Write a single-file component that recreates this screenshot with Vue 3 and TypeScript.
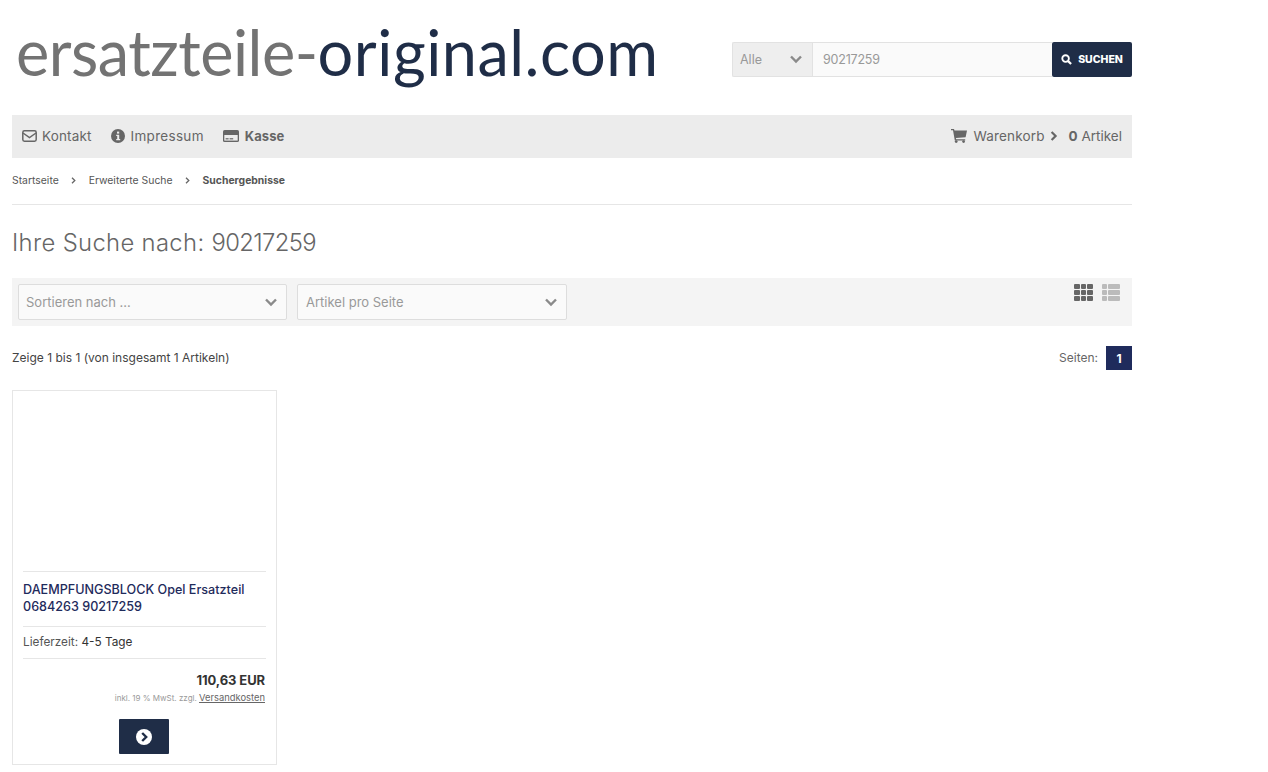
<template>
  <div class="page">
    <header class="top">
      <div class="logo"><span class="logo-grey">ersatzteile-</span><span class="logo-navy">original.com</span></div>
      <form class="search" @submit.prevent>
        <div class="search-cat">
          <span>Alle</span>
          <svg class="chev" width="14" height="14" viewBox="0 0 14 14"><path d="M2 4.5 7 9.5 12 4.5" fill="none" stroke="currentColor" stroke-width="2.4" /></svg>
        </div>
        <div class="search-input">90217259</div>
        <button class="search-btn" type="button">
          <svg width="11" height="11" viewBox="0 0 12 12"><circle cx="5" cy="5" r="3.6" fill="none" stroke="#fff" stroke-width="2" /><path d="M7.8 7.8 11 11" stroke="#fff" stroke-width="2.4" /></svg>
          <span>SUCHEN</span>
        </button>
      </form>
    </header>

    <nav class="nav">
      <div class="nav-links">
        <a class="nav-item">
          <svg width="15" height="12" viewBox="0 0 15 12"><rect x=".8" y=".8" width="13.4" height="10.4" rx="1.6" fill="none" stroke="#666" stroke-width="1.5" /><path d="M1 3 7.5 7.5 14 3" fill="none" stroke="#666" stroke-width="1.5" /></svg>
          Kontakt
        </a>
        <a class="nav-item nav-wide">
          <svg width="14" height="14" viewBox="0 0 14 14"><circle cx="7" cy="7" r="7" fill="#666" /><rect x="6" y="2.6" width="2.2" height="2" fill="#ececec" /><path d="M5.2 5.8H8.2V10H9.2V11.2H5.2V10H6.2V7H5.2Z" fill="#ececec" /></svg>
          Impressum
        </a>
        <a class="nav-item nav-strong">
          <svg width="16" height="12" viewBox="0 0 16 12"><rect width="16" height="12" rx="1.6" fill="#666" /><rect x="1.3" y="5" width="13.4" height="5.6" fill="#ececec" /><rect x="2.6" y="8.2" width="3" height="1.2" fill="#666" /><rect x="6.6" y="8.2" width="3.6" height="1.2" fill="#666" /></svg>
          Kasse
        </a>
      </div>
      <div class="cart">
        <svg width="16" height="14" viewBox="0 0 16 14"><path d="M0 0H3L3.5 1.6H16L14.6 8.2 4.9 9 5.2 10.2H14.2V11.4H3.8L2 1.3H0Z" fill="#666" /><circle cx="5.2" cy="12.6" r="1.4" fill="#666" /><circle cx="12.6" cy="12.6" r="1.4" fill="#666" /></svg>
        <span class="cart-label">Warenkorb</span>
        <svg class="cart-arrow" width="8" height="10" viewBox="0 0 8 10"><path d="M1.6 1 5.6 5 1.6 9" fill="none" stroke="#666" stroke-width="2.2" /></svg>
        <span class="cart-count"><b>0</b> Artikel</span>
      </div>
    </nav>

    <div class="crumbs">
      <span>Startseite</span>
      <svg width="5" height="7" viewBox="0 0 5 7"><path d="M1 .8 3.8 3.5 1 6.2" fill="none" stroke="#666" stroke-width="1.3" /></svg>
      <span>Erweiterte Suche</span>
      <svg width="5" height="7" viewBox="0 0 5 7"><path d="M1 .8 3.8 3.5 1 6.2" fill="none" stroke="#666" stroke-width="1.3" /></svg>
      <b>Suchergebnisse</b>
    </div>

    <h1 class="title">Ihre Suche nach: <span>90217259</span></h1>

    <div class="toolbar">
      <div v-for="s in selects" :key="s" class="sel">
        <span>{{ s }}</span>
        <svg class="chev" width="14" height="14" viewBox="0 0 14 14"><path d="M2 4.5 7 9.5 12 4.5" fill="none" stroke="currentColor" stroke-width="2.4" /></svg>
      </div>
      <div class="views">
        <div class="grid-ico">
          <i v-for="n in 9" :key="n"></i>
        </div>
        <div class="list-ico">
          <template v-for="n in 3" :key="n"><i></i><i></i></template>
        </div>
      </div>
    </div>

    <div class="result-row">
      <span class="count">Zeige 1 bis 1 (von insgesamt 1 Artikeln)</span>
      <div class="pager">
        <span class="pager-label">Seiten:</span>
        <b class="page-no">1</b>
      </div>
    </div>

    <article class="card">
      <div class="card-img"></div>
      <h2 class="card-title">DAEMPFUNGSBLOCK Opel Ersatzteil 0684263 90217259</h2>
      <div class="card-ship">Lieferzeit: <span>4-5 Tage</span></div>
      <div class="card-price">110,63 EUR</div>
      <div class="card-tax">inkl. 19 % MwSt. zzgl. <u>Versandkosten</u></div>
      <button class="card-btn" type="button">
        <svg width="16" height="16" viewBox="0 0 16 16"><circle cx="8" cy="8" r="8" fill="#fff" /><path d="M6.2 4 10.2 8 6.2 12" fill="none" stroke="#1f2d47" stroke-width="2.4" /></svg>
      </button>
    </article>
  </div>
</template>

<script setup lang="ts">
const selects: string[] = ['Sortieren nach ...', 'Artikel pro Seite']
</script>

<style>
html,
body {
  background: #fff;
}
</style>

<style scoped>
.page {
  width: 1120px;
  margin-left: 12px;
  font-family: Inter, "Open Sans", sans-serif;
  color: #555;
  height: 772px;
  overflow: hidden;
}
.top {
  height: 115px;
  display: flex;
  justify-content: space-between;
  align-items: flex-start;
}
.logo {
  font-family: Lato, sans-serif;
  font-size: 63px;
  line-height: 80px;
  margin: 12px 0 0 4px;
  white-space: nowrap;
}
.logo-grey {
  color: #737373;
  letter-spacing: -0.5px;
}
.logo-navy {
  color: #1f2d47;
  letter-spacing: 0.5px;
}
.search {
  display: flex;
  margin-top: 42px;
  height: 35px;
  width: 400px;
  font-size: 12.5px;
  color: #999;
}
.search-cat {
  width: 80px;
  box-sizing: border-box;
  background: #eee;
  border: 1px solid #e2e2e2;
  border-right: 0;
  border-radius: 2px 0 0 2px;
  display: flex;
  align-items: center;
  justify-content: space-between;
  padding: 0 9px 1px 7px;
}
.search-input {
  flex: 1;
  background: #fafafa;
  border: 1px solid #e2e2e2;
  border-right: 0;
  display: flex;
  align-items: center;
  padding: 0 0 1px 10px;
  letter-spacing: -0.2px;
}
.search-btn {
  width: 80px;
  border: 0;
  padding: 0;
  background: #1f2d47;
  border-radius: 2px;
  color: #fff;
  font: 800 10.5px Inter, sans-serif;
  display: flex;
  align-items: center;
  justify-content: center;
  gap: 6px;
}
.chev {
  color: #8a8a8a;
}
.nav {
  height: 43px;
  background: #ececec;
  display: flex;
  justify-content: space-between;
  align-items: center;
  padding: 0 10px 1px;
  box-sizing: border-box;
  font-size: 13.5px;
  letter-spacing: 0.15px;
  color: #666;
}
.nav-links {
  display: flex;
  gap: 19px;
}
.nav-item {
  display: flex;
  align-items: center;
  gap: 5px;
}
.nav-wide {
  gap: 6px;
  letter-spacing: 0.3px;
}
.nav-strong {
  gap: 6px;
  font-size: 13px;
  font-weight: 700;
  letter-spacing: 0.1px;
}
.cart {
  display: flex;
  align-items: center;
}
.cart-label {
  margin-left: 7px;
}
.cart-arrow {
  margin: 0 11px 0 5px;
}
.cart-count {
  letter-spacing: 0;
}
.crumbs {
  height: 47px;
  padding-bottom: 2px;
  box-sizing: border-box;
  border-bottom: 1px solid #e6e6e6;
  display: flex;
  align-items: center;
  gap: 12.5px;
  font-size: 10.4px;
  color: #555;
}
.title {
  margin: 24px 0 21px;
  font-size: 23.8px;
  line-height: 28px;
  font-weight: 300;
  letter-spacing: 0.35px;
  color: #666;
}
.title span {
  letter-spacing: -0.6px;
}
.toolbar {
  height: 48px;
  background: #f4f4f4;
  display: flex;
  padding: 6px;
  box-sizing: border-box;
  gap: 10px;
}
.sel {
  width: 269px;
  height: 36px;
  box-sizing: border-box;
  background: #fafafa;
  border: 1px solid #ddd;
  border-radius: 2px;
  display: flex;
  align-items: center;
  justify-content: space-between;
  padding: 0 8px 1px 7px;
  font-size: 13px;
  color: #999;
}
.sel + .sel {
  width: 270px;
  padding-left: 8px;
}
.views {
  margin-left: auto;
  display: flex;
  gap: 9px;
  padding-right: 6px;
}
.grid-ico,
.list-ico {
  display: grid;
  height: 17px;
  gap: 1px;
}
.grid-ico {
  width: 19px;
  grid-template-columns: repeat(3, 1fr);
  grid-template-rows: repeat(3, 1fr);
}
.grid-ico i {
  background: #666;
  border-radius: 1px;
}
.list-ico {
  width: 18px;
  grid-template-columns: 5px 1fr;
  grid-template-rows: repeat(3, 1fr);
}
.list-ico i {
  background: #bbb;
  border-radius: 1px;
}
.result-row {
  display: flex;
  justify-content: space-between;
  align-items: center;
  margin-top: 20px;
  height: 24px;
  font-size: 12px;
}
.count {
  color: #444;
  padding-bottom: 2px;
}
.pager {
  display: flex;
  align-items: center;
  gap: 8px;
  color: #666;
}
.pager-label {
  padding-bottom: 2px;
}
.page-no {
  width: 26px;
  height: 24px;
  background: #1f2b5c;
  color: #fff;
  display: flex;
  align-items: center;
  justify-content: center;
}
.card {
  margin-top: 20px;
  width: 265px;
  height: 375px;
  box-sizing: border-box;
  border: 1px solid #e6e6e6;
  padding: 0 10px;
}
.card-img {
  height: 180px;
  border-bottom: 1px solid #e6e6e6;
}
.card-title {
  margin: 0;
  padding: 9px 0 11px;
  font-size: 12.6px;
  line-height: 17px;
  font-weight: 500;
  color: #1f2b5c;
  border-bottom: 1px solid #e6e6e6;
}
.card-ship {
  height: 31px;
  line-height: 30px;
  font-size: 11.8px;
  color: #555;
  border-bottom: 1px solid #e6e6e6;
}
.card-ship span {
  color: #333;
}
.card-price {
  margin-top: 12px;
  padding-right: 1px;
  text-align: right;
  font-size: 13px;
  line-height: 18px;
  font-weight: 700;
  letter-spacing: -0.1px;
  color: #333;
}
.card-tax {
  margin-top: 2px;
  padding-right: 1px;
  text-align: right;
  font-size: 8px;
  line-height: 14px;
  color: #999;
}
.card-tax u {
  font-size: 9.4px;
  color: #666;
}
.card-btn {
  display: flex;
  align-items: center;
  justify-content: center;
  width: 50px;
  height: 35px;
  margin: 14px 0 0 96px;
  padding: 0;
  border: 0;
  border-radius: 1px;
  background: #1f2d47;
}
</style>
